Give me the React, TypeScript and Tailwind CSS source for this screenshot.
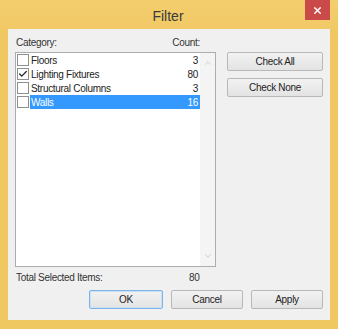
import { Check, ChevronDown, ChevronUp, X } from 'lucide-react';

type Item = { name: string; count: number; checked: boolean; selected?: boolean };

const items: Item[] = [
  { name: 'Floors', count: 3, checked: false },
  { name: 'Lighting Fixtures', count: 80, checked: true },
  { name: 'Structural Columns', count: 3, checked: false },
  { name: 'Walls', count: 16, checked: false, selected: true },
];

function Button({ label, primary }: { label: string; primary?: boolean }) {
  return (
    <button
      className={`flex flex-1 items-center justify-center rounded-[2px] border bg-gradient-to-b from-[#f2f2f2] to-[#e3e3e3] text-[10px] text-[#222] ${
        primary ? 'border-[#7eb4ea] shadow-[inset_0_0_0_1px_#c9e0f7]' : 'border-[#b8b8b8]'
      }`}
    >
      {label}
    </button>
  );
}

function Row({ item }: { item: Item }) {
  return (
    <div className="flex h-[14px] items-center">
      <div className="ml-[1px] flex h-[12px] w-[12px] items-center justify-center border border-[#8f8f8f] bg-white">
        {item.checked && <Check className="h-[10px] w-[10px] text-[#222]" strokeWidth={3} />}
      </div>
      <div
        className={`ml-[1px] flex h-[14px] flex-1 items-center justify-between pl-[1px] pr-[2px] ${
          item.selected ? 'bg-[#3399ff] text-white' : 'text-[#222]'
        }`}
      >
        <span>{item.name}</span>
        <span>{item.count}</span>
      </div>
    </div>
  );
}

export default function App() {
  return (
    <div
      className="flex h-[329px] w-[338px] flex-col bg-[#f0c862] tracking-[-0.3px]"
      style={{ fontFamily: '"Liberation Sans", Arial, sans-serif' }}
    >
      {/* Title bar */}
      <div className="flex h-[29px] items-start bg-gradient-to-b from-[#f4cd6e] to-[#f1c966]">
        <div className="w-[31px]" />
        <div className="flex flex-1 items-center justify-center pt-[6px] text-[14px] tracking-normal text-[#3a3a3a]">
          Filter
        </div>
        <div className="mr-[8px] flex h-[20px] w-[25px] items-center justify-center bg-[#c94a48]">
          <X className="h-[11px] w-[11px] text-white" strokeWidth={3} />
        </div>
      </div>

      {/* Body */}
      <div className="mx-[8px] flex h-[291px] flex-col bg-[#f0f0f0] px-[7px] text-[10px]">
        <div className="mt-[7px] flex">
          <div className="flex w-[201px] flex-col">
            <div className="flex h-[12px] items-center justify-between pl-[1px] pr-[16px] text-[#333]">
              <span>Category:</span>
              <span>Count:</span>
            </div>
            {/* List box */}
            <div className="mt-[4px] flex h-[215px] border border-[#abadb3] bg-white">
              <div className="flex flex-1 flex-col">
                {items.map((item) => (
                  <Row key={item.name} item={item} />
                ))}
              </div>
              <div className="flex w-[15px] flex-col items-center justify-between bg-[#f4f4f4] py-[5px]">
                <ChevronUp className="h-[10px] w-[10px] text-[#c6c6c6]" strokeWidth={2} />
                <ChevronDown className="h-[10px] w-[10px] text-[#c6c6c6]" strokeWidth={2} />
              </div>
            </div>
            <div className="mt-[4px] flex h-[12px] items-center pl-[1px] text-[#333]">
              <span className="w-[173px]">Total Selected Items:</span>
              <span>80</span>
            </div>
          </div>

          <div className="ml-[11px] mt-[16px] flex w-[96px] flex-col gap-[7px]">
            <div className="flex h-[19px] flex-col">
              <Button label="Check All" />
            </div>
            <div className="flex h-[19px] flex-col">
              <Button label="Check None" />
            </div>
          </div>
        </div>

        <div className="mt-[7px] flex justify-end gap-[8px]">
          <div className="flex h-[19px] w-[74px] flex-col">
            <Button label="OK" primary />
          </div>
          <div className="flex h-[19px] w-[72px] flex-col">
            <Button label="Cancel" />
          </div>
          <div className="flex h-[19px] w-[72px] flex-col">
            <Button label="Apply" />
          </div>
        </div>
      </div>
      <div className="flex-1" />
    </div>
  );
}
